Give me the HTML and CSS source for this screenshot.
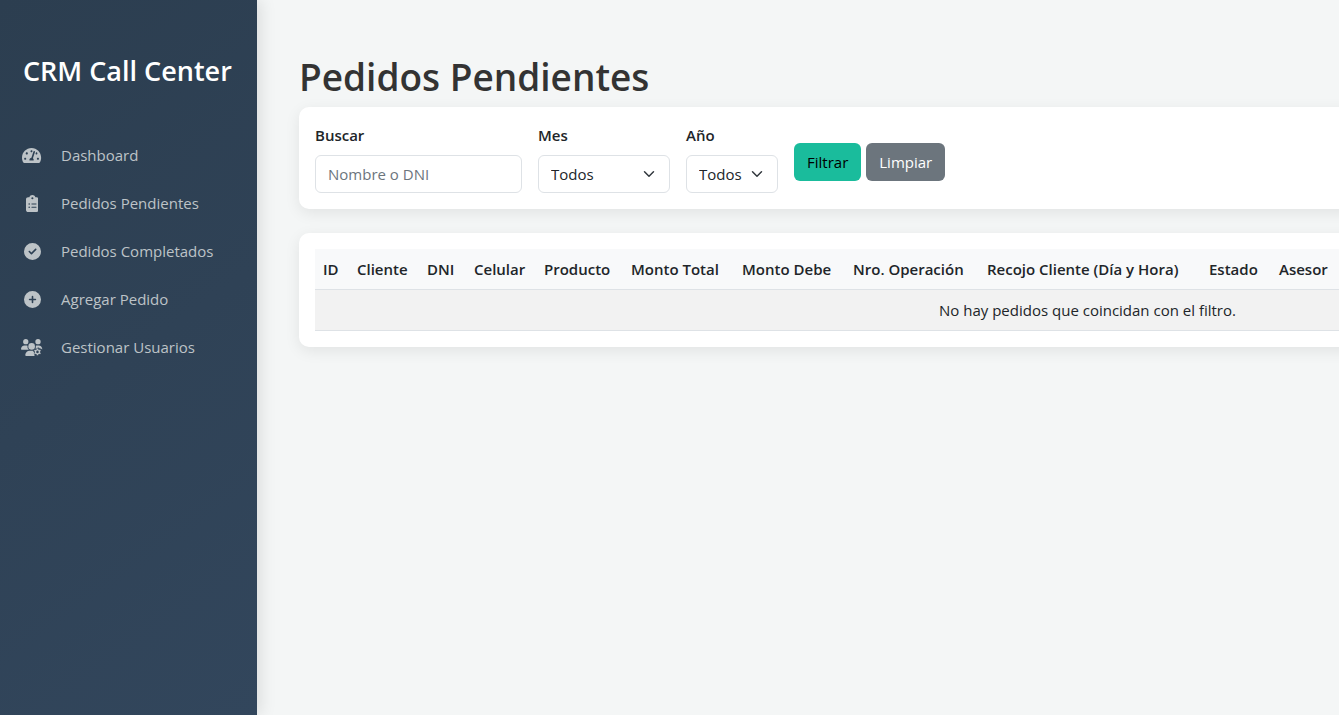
FILE: index.html
```html
<!DOCTYPE html>
<html lang="es">
<head>
<meta charset="utf-8">
<title>CRM Call Center</title>
<link rel="stylesheet" href="styles.css">
</head>
<body>
<div class="layout">
  <aside class="sidebar">
    <h2 class="brand">CRM Call Center</h2>
    <nav class="menu">
      <a class="menu-link" href="#"><span class="menu-icon"><svg viewBox="0 0 576 512" aria-hidden="true"><path d="M288 32C128.94 32 0 160.94 0 320c0 52.8 14.25 102.26 39.06 144.8 5.61 9.62 16.3 15.2 27.44 15.2h443c11.14 0 21.83-5.58 27.44-15.2C561.75 422.26 576 372.8 576 320c0-159.06-128.94-288-288-288zm0 64c14.71 0 26.58 10.13 30.32 23.65-1.11 2.26-2.64 4.23-3.45 6.67l-9.22 27.67c-5.13 3.49-10.97 6.01-17.64 6.01-17.67 0-32-14.33-32-32S270.33 96 288 96zM96 384c-17.67 0-32-14.33-32-32s14.33-32 32-32 32 14.33 32 32-14.33 32-32 32zm48-160c-17.67 0-32-14.33-32-32s14.33-32 32-32 32 14.33 32 32-14.33 32-32 32zm246.77-72.41l-61.33 184C343.13 347.33 352 364.54 352 384c0 11.72-3.38 22.55-8.88 32H232.88c-5.5-9.45-8.88-20.28-8.88-32 0-33.94 26.5-61.43 59.9-63.59l61.34-184.01c4.17-12.56 17.73-19.45 30.36-15.17 12.57 4.19 19.35 17.79 15.17 30.36zm14.66 57.2l15.52-46.55c3.47-1.29 7.13-2.23 11.05-2.23 17.67 0 32 14.33 32 32s-14.33 32-32 32c-11.38-.01-20.89-6.28-26.57-15.22zM480 384c-17.67 0-32-14.33-32-32s14.33-32 32-32 32 14.33 32 32-14.33 32-32 32z"/><path d="M225 410h126v50H225z"/></svg></span>Dashboard</a>
      <a class="menu-link" href="#"><span class="menu-icon"><svg viewBox="0 0 384 512" aria-hidden="true"><path d="M192 0c-41.8 0-77.4 26.7-90.5 64H64C28.7 64 0 92.7 0 128V448c0 35.3 28.7 64 64 64H320c35.3 0 64-28.7 64-64V128c0-35.3-28.7-64-64-64H282.5C269.4 26.7 233.8 0 192 0zm0 64a32 32 0 1 1 0 64 32 32 0 1 1 0-64zM72 272a24 24 0 1 1 48 0 24 24 0 1 1 -48 0zm104-16H304c8.8 0 16 7.2 16 16s-7.2 16-16 16H176c-8.8 0-16-7.2-16-16s7.2-16 16-16zM72 368a24 24 0 1 1 48 0 24 24 0 1 1 -48 0zm88 0c0-8.8 7.2-16 16-16H304c8.8 0 16 7.2 16 16s-7.2 16-16 16H176c-8.8 0-16-7.2-16-16z"/></svg></span>Pedidos Pendientes</a>
      <a class="menu-link" href="#"><span class="menu-icon"><svg viewBox="0 0 512 512" aria-hidden="true"><path d="M256 512A256 256 0 1 0 256 0a256 256 0 1 0 0 512zM369 209L241 337c-9.4 9.4-24.6 9.4-33.9 0l-64-64c-9.4-9.4-9.4-24.6 0-33.9s24.6-9.4 33.9 0l47 47L335 175c9.4-9.4 24.6-9.4 33.9 0s9.4 24.6 0 33.9z"/></svg></span>Pedidos Completados</a>
      <a class="menu-link" href="#"><span class="menu-icon"><svg viewBox="0 0 512 512" aria-hidden="true"><path d="M256 512A256 256 0 1 0 256 0a256 256 0 1 0 0 512zM232 344V280H168c-13.3 0-24-10.7-24-24s10.7-24 24-24h64V168c0-13.3 10.7-24 24-24s24 10.7 24 24v64h64c13.3 0 24 10.7 24 24s-10.7 24-24 24H280v64c0 13.3-10.7 24-24 24s-24-10.7-24-24z"/></svg></span>Agregar Pedido</a>
      <a class="menu-link" href="#"><span class="menu-icon"><svg viewBox="0 0 640 512" aria-hidden="true"><circle cx="144" cy="80" r="80"/><circle cx="512" cy="80" r="80"/><path d="M0 299c0-59 48-107 107-107h43c16 0 31 4 45 10a128 128 0 0 0 39 118H21c-12 0-21-9-21-21zM445 202c14-6 29-10 45-10h43c59 0 107 48 107 107 0 5-2 10-5 14-22-30-45-35-70-24-20-42-70-42-92 0-15-7-28-5-40 2a128 128 0 0 0 12-89z"/><circle cx="320" cy="224" r="100"/><path d="M128 485c0-74 60-133 133-133h110c-3 30 12 40 24 48-20 35 0 65 18 76-8 12-9 24-6 36H155c-15 0-27-12-27-27z"/><path fill-rule="evenodd" d="M472 284h48v32l26 15 28-16 25 43-28 15v30l28 16-25 43-28-16-26 15v32h-48v-32l-26-15-28 16-25-43 28-16v-30l-28-15 25-43 28 16 26-15zM496 350a38 38 0 1 0 0 76 38 38 0 1 0 0-76z"/></svg></span>Gestionar Usuarios</a>
    </nav>
  </aside>
  <main class="content">
    <h1 class="title">Pedidos Pendientes</h1>
    <form class="card filters">
      <div class="field field-search">
        <label for="q">Buscar</label>
        <input class="control" id="q" type="text" placeholder="Nombre o DNI">
      </div>
      <div class="field field-month">
        <label for="mes">Mes</label>
        <select class="control select" id="mes"><option>Todos</option></select>
      </div>
      <div class="field field-year">
        <label for="anio">Año</label>
        <select class="control select" id="anio"><option>Todos</option></select>
      </div>
      <div class="actions">
        <button class="btn btn-primary" type="submit">Filtrar</button>
        <a class="btn btn-secondary" href="#">Limpiar</a>
      </div>
    </form>
    <section class="card">
      <table class="orders">
        <colgroup>
          <col class="c-id"><col class="c-short"><col class="c-dni"><col class="c-short"><col class="c-product"><col class="c-amount"><col class="c-amount"><col class="c-operation"><col class="c-pickup"><col class="c-short"><col>
        </colgroup>
        <thead>
          <tr><th>ID</th><th>Cliente</th><th>DNI</th><th>Celular</th><th>Producto</th><th>Monto Total</th><th>Monto Debe</th><th>Nro. Operación</th><th>Recojo Cliente (Día y Hora)</th><th>Estado</th><th>Asesor</th></tr>
        </thead>
        <tbody>
          <tr><td class="empty" colspan="11">No hay pedidos que coincidan con el filtro.</td></tr>
        </tbody>
      </table>
    </section>
  </main>
</div>
</body>
</html>
```
FILE: styles.css
```css
* { box-sizing: border-box; }
body {
  margin: 0;
  background: #f4f6f6;
  color: #212529;
  font-family: "Segoe UI", "Open Sans", "Noto Sans", sans-serif;
  font-size: 15px;
  line-height: 24px;
}
.layout {
  display: flex;
  min-height: 100vh;
  overflow: hidden;
}
.sidebar {
  flex: 0 0 257px;
  padding: 47px 0;
  background: linear-gradient(145deg, #2c3e50, #32465c);
  box-shadow: 4px 0 15px rgba(0, 0, 0, 0.1);
}
.brand {
  margin: 0 0 37px;
  padding: 0 23px;
  color: #fff;
  font-size: 27px;
  line-height: 47px;
  font-weight: 600;
  white-space: nowrap;
}
.menu { display: flex; flex-direction: column; }
.menu-link {
  display: flex;
  align-items: center;
  gap: 17px;
  padding: 12px 20px;
  color: #bdc3c7;
  text-decoration: none;
}
.menu-icon { display: flex; justify-content: center; width: 24px; }
.menu-icon svg { display: block; height: 17px; fill: currentColor; }
.content {
  flex: 0 0 auto;
  padding: 53px 42px;
}
.title {
  margin: 0 0 6px;
  color: #333;
  font-size: 37px;
  line-height: 48px;
  font-weight: 600;
}
.card {
  margin-bottom: 24px;
  padding: 16px;
  border-radius: 10px;
  background: #fff;
  box-shadow: 0 4px 15px rgba(0, 0, 0, 0.08);
}
.filters { display: flex; align-items: center; gap: 16px; }
.field { display: flex; flex-direction: column; gap: 8px; }
.field label { font-weight: 600; }
.field-search { width: 207px; }
.field-month { width: 132px; }
.field-year { width: 92px; }
.control {
  width: 100%;
  height: 38px;
  padding: 6px 12px;
  border: 1px solid #dee2e6;
  border-radius: 6px;
  background: #fff;
  color: #212529;
  font: inherit;
}
.control::placeholder { color: #6c757d; opacity: 1; }
.select {
  appearance: none;
  background: #fff url("data:image/svg+xml,%3Csvg xmlns='http://www.w3.org/2000/svg' viewBox='0 0 16 16'%3E%3Cpath fill='none' stroke='%23343a40' stroke-linecap='round' stroke-linejoin='round' stroke-width='2' d='m2 5 6 6 6-6'/%3E%3C/svg%3E") no-repeat right 14px center / 12px 12px;
}
.actions { display: flex; gap: 5px; padding-top: 8px; }
.btn {
  height: 38px;
  padding: 6px 12px;
  border: 1px solid transparent;
  border-radius: 6px;
  font: inherit;
  text-decoration: none;
}
.btn-primary { background: #1abc9c; color: #000; }
.btn-secondary { background: #6c757d; color: #fff; }
.orders {
  width: 1545px;
  table-layout: fixed;
  border-collapse: collapse;
}
.orders th, .orders td {
  padding: 8px;
  border-bottom: 1px solid #dee2e6;
  text-align: left;
  white-space: nowrap;
}
.orders th { background: #f8f9fa; font-weight: 600; }
.orders .empty { background: #f2f2f2; text-align: center; }
.c-id { width: 34px; }
.c-dni { width: 47px; }
.c-short { width: 70px; }
.c-product { width: 87px; }
.c-amount { width: 111px; }
.c-operation { width: 134px; }
.c-pickup { width: 222px; }
```
